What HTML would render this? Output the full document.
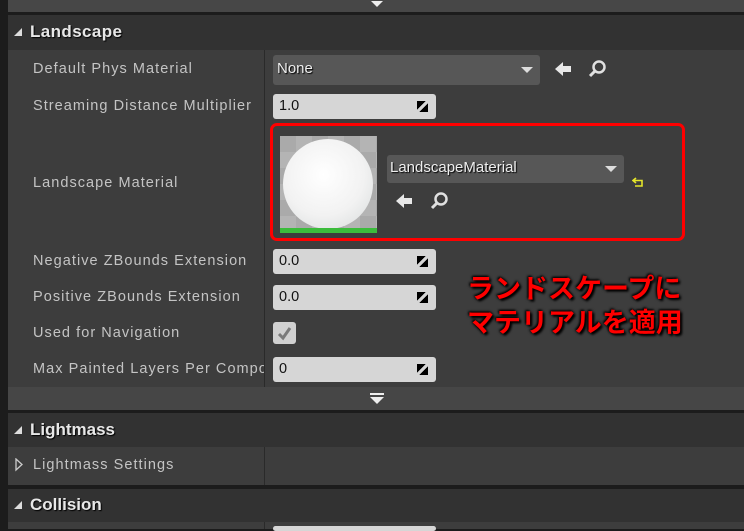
<!DOCTYPE html>
<html><head><meta charset="utf-8"><style>
*{margin:0;padding:0;box-sizing:border-box}
body{width:744px;height:529px;background:#1c1c1c;position:relative;overflow:hidden;font-family:"Liberation Sans","Noto Sans CJK JP",sans-serif}
.a{position:absolute}
.lbl{position:absolute;left:33px;color:#c4c4c4;font-size:14.5px;letter-spacing:1.05px;white-space:nowrap;overflow:hidden}
.hdr{position:absolute;left:8px;right:0;background:#323232;color:#e8e8e8;font-weight:bold;font-size:17px;text-shadow:1px 1px 1px #000}
.hdr span{position:absolute;left:22px}
.tri{position:absolute;left:6px;width:0;height:0;border-left:8px solid transparent;border-bottom:8px solid #ddd}
.num{position:absolute;left:273px;width:163px;height:25px;background:#d6d6d6;border-radius:3px;color:#111;font-size:14.5px;padding:4px 6px}
.num i{position:absolute;right:8px;top:7px;width:11px;height:11px;background:linear-gradient(135deg,#000 0 40%,transparent 40% 60%,#000 60%)}
.rows{position:absolute;left:8px;right:0;background:#3d3d3d}
.div{position:absolute;left:264px;width:1px;background:#2a2a2a}
</style></head><body>
<div class="a" style="left:8px;right:0;top:0;height:12px;background:#474747"></div>
<div class="a" style="left:371px;top:1px;border-left:6px solid transparent;border-right:6px solid transparent;border-top:6px solid #eee"></div>

<div class="hdr" style="top:15px;height:35px"><div class="tri" style="top:13px"></div><span style="top:7px;letter-spacing:0.4px">Landscape</span></div>
<div class="rows" style="top:50px;height:337px"></div>
<div class="div" style="top:50px;height:337px"></div>

<div class="lbl" style="top:61px">Default Phys Material</div>
<div class="lbl" style="top:98px">Streaming Distance Multiplier</div>
<div class="lbl" style="top:175px">Landscape Material</div>
<div class="lbl" style="top:253px">Negative ZBounds Extension</div>
<div class="lbl" style="top:289px">Positive ZBounds Extension</div>
<div class="lbl" style="top:325px">Used for Navigation</div>
<div class="lbl" style="top:361px;width:231px">Max Painted Layers Per Component</div>

<div class="a" style="left:273px;top:55px;width:267px;height:30px;background:#575757;border-radius:3px;color:#eee;font-size:15px;padding:5px 4px;text-shadow:1px 1px 1px #000">None</div>
<div class="a" style="left:521px;top:67px;border-left:6px solid transparent;border-right:6px solid transparent;border-top:6px solid #ddd"></div>
<svg class="a" style="left:553px;top:60px" width="20" height="18"><path d="M2 9 L10 2 L10 6 L18 6 L18 12 L10 12 L10 16Z" fill="#e8e8e8"/></svg>
<svg class="a" style="left:588px;top:59px" width="20" height="20"><circle cx="11" cy="8" r="5.5" stroke="#e0e0e0" stroke-width="2.5" fill="none"/><path d="M7 12 L2 17" stroke="#e0e0e0" stroke-width="3"/></svg>

<div class="num" style="top:94px">1.0<i></i></div>

<div class="a" style="left:270px;top:123px;width:415px;height:118px;border:3px solid #f00;border-radius:7px"></div>
<div class="a" style="left:280px;top:136px;width:97px;height:97px;background:#9a9a9a;overflow:hidden">
 <div class="a" style="left:0;top:0;width:97px;height:97px;background:repeating-conic-gradient(#b4b4b4 0 25%,#aaaaaa 0 50%) 0 0/32px 32px"></div>
 <div class="a" style="left:3px;top:3px;width:90px;height:90px;border-radius:50%;background:radial-gradient(circle at 45% 40%,#fff 0,#f2f2f2 55%,#d6dada 100%)"></div>
 <div class="a" style="left:0;bottom:0;width:97px;height:5px;background:#3cbc3c"></div>
</div>
<div class="a" style="left:387px;top:155px;width:237px;height:28px;background:#575757;border-radius:3px;color:#eee;font-size:15px;padding:4px 3px;text-shadow:1px 1px 1px #000">LandscapeMaterial</div>
<div class="a" style="left:605px;top:166px;border-left:6px solid transparent;border-right:6px solid transparent;border-top:6px solid #ddd"></div>
<svg class="a" style="left:394px;top:192px" width="20" height="18"><path d="M2 9 L10 2 L10 6 L18 6 L18 12 L10 12 L10 16Z" fill="#e8e8e8"/></svg>
<svg class="a" style="left:430px;top:191px" width="20" height="20"><circle cx="11" cy="8" r="5.5" stroke="#e0e0e0" stroke-width="2.5" fill="none"/><path d="M7 12 L2 17" stroke="#e0e0e0" stroke-width="3"/></svg>
<svg class="a" style="left:632px;top:176px" width="14" height="12"><path d="M4 2 L1 4.5 L4 7 M1 4.5 H10 V10 H3" stroke="#e5e52a" stroke-width="1.6" fill="none"/></svg>

<div class="num" style="top:249px">0.0<i></i></div>
<div class="num" style="top:285px">0.0<i></i></div>
<div class="a" style="left:273px;top:322px;width:23px;height:22px;background:#d0d0d0;border-radius:3px"></div>
<svg class="a" style="left:275px;top:324px" width="19" height="18"><path d="M4 10 L8 14 L15 4" stroke="#7a7a7a" stroke-width="3" fill="none"/></svg>
<div class="num" style="top:357px">0<i></i></div>

<div class="a" style="left:467px;top:270px;color:#f00;font-size:27px;font-weight:bold;line-height:34px;text-shadow:2px 2px 2px #000,-1px -1px 2px #000,0 0 3px #000;font-family:'Noto Sans CJK JP',sans-serif">ランドスケープに<br>マテリアルを適用</div>

<div class="a" style="left:8px;right:0;top:387px;height:23px;background:#464646"></div>
<div class="a" style="left:370px;top:393px;width:14px;height:2px;background:#eee"></div>
<div class="a" style="left:370px;top:397px;border-left:7px solid transparent;border-right:7px solid transparent;border-top:7px solid #eee"></div>

<div class="hdr" style="top:413px;height:34px"><div class="tri" style="top:13px"></div><span style="top:7px">Lightmass</span></div>
<div class="rows" style="top:447px;height:38px"></div>
<div class="div" style="top:447px;height:38px"></div>
<svg class="a" style="left:14px;top:458px" width="10" height="14"><path d="M2 1 L8 6.5 L2 12Z" stroke="#ccc" stroke-width="1.3" fill="none"/></svg>
<div class="lbl" style="top:457px">Lightmass Settings</div>

<div class="hdr" style="top:489px;height:33px"><div class="tri" style="top:12px"></div><span style="top:6px">Collision</span></div>
<div class="rows" style="top:522px;height:7px"></div>
<div class="div" style="top:522px;height:7px"></div>
<div class="a" style="left:273px;top:526px;width:163px;height:5px;background:#d6d6d6;border-radius:3px"></div>
</body></html>
